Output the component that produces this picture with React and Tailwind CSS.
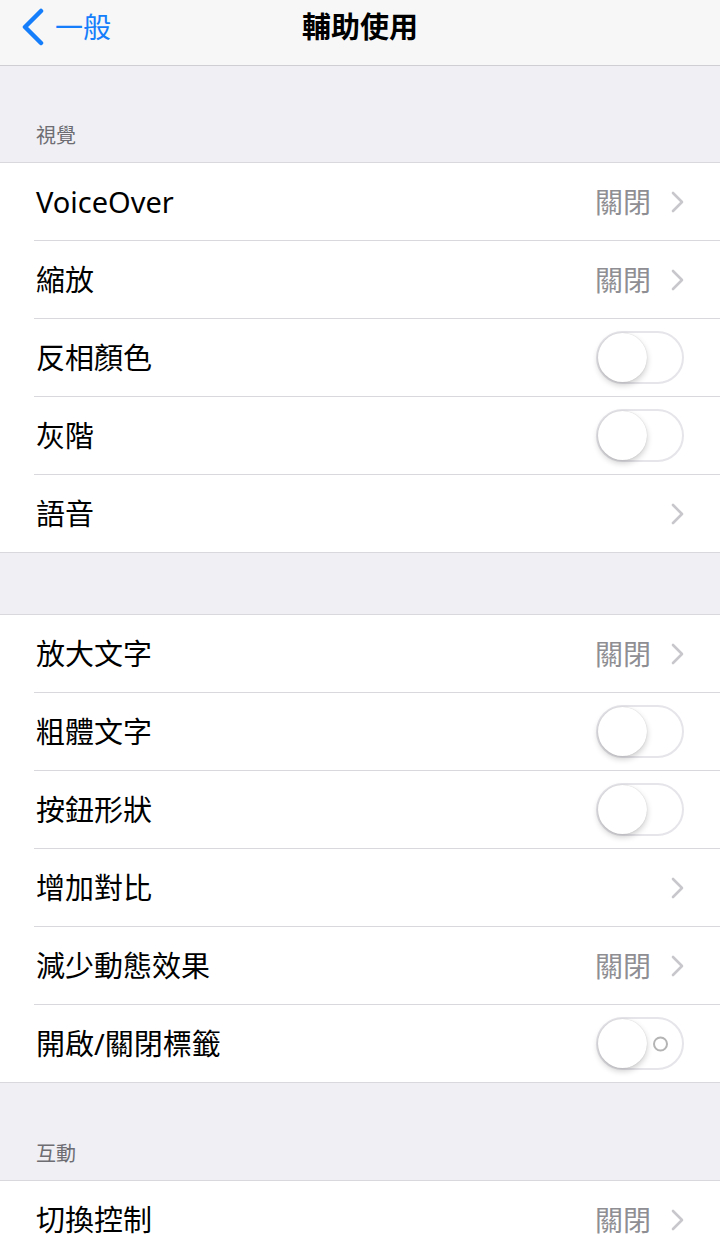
import React from 'react';

const FONT = { fontFamily: '"Noto Sans", "Noto Sans CJK TC", sans-serif' };

const Chevron = () => (
  <svg width="13" height="22" viewBox="0 0 13 22" className="ml-[20px]">
    <path d="M2 2 L11 11 L2 20" fill="none" stroke="#c7c7cc" strokeWidth="2.6" strokeLinecap="round" strokeLinejoin="round" />
  </svg>
);

const Toggle = ({ label }) => (
  <div className="relative w-[88px] h-[53px] rounded-full border-[2px] border-[#e5e5ea] bg-white">
    {label && (
      <div className="absolute right-[14px] top-1/2 -translate-y-1/2 w-[15px] h-[15px] rounded-full border-[2px] border-[#b4b4b4]" />
    )}
    <div className="absolute left-0 top-0 w-[49px] h-[49px] rounded-full bg-white shadow-[0_3px_6px_rgba(0,0,0,0.2),0_0_1px_rgba(0,0,0,0.2)]" />
  </div>
);

const Row = ({ title, value, chevron, toggle, toggleLabel, last }) => (
  <div className="pl-[34px] bg-white">
    <div className={`flex items-center justify-between pr-[36px] ${last ? 'h-[77px]' : 'h-[78px] border-b border-[#d9d9dd]'}`}>
      <span className="pl-[2px] text-[29px] text-black">{title}</span>
      <div className="flex items-center">
        {value && <span className="text-[28px] text-[#8e8e93]">{value}</span>}
        {chevron && <Chevron />}
        {toggle && <Toggle label={toggleLabel} />}
      </div>
    </div>
  </div>
);

const Group = ({ children }) => (
  <div className="border-t border-b border-[#d9d9dd] bg-white">{children}</div>
);

const Header = ({ text, h }) => (
  <div className={`${h} flex items-end pb-[11px] px-[36px] text-[20px] text-[#6d6d72]`}>{text}</div>
);

export default function App() {
  return (
    <div className="w-[720px] h-[1234px] overflow-hidden bg-[#efeff4]" style={FONT}>
      <div className="h-[66px] bg-[#f7f7f8] border-b border-[#cfcfd3] relative flex items-center justify-center">
        <div className="absolute left-[20px] top-0 h-[54px] flex items-center text-[#157efb]">
          <svg width="26" height="38" viewBox="0 0 26 38">
            <path d="M21 3 L5 19 L21 35" fill="none" stroke="#157efb" strokeWidth="4.5" strokeLinecap="round" strokeLinejoin="round" />
          </svg>
          <span className="ml-[9px] text-[28px]">一般</span>
        </div>
        <span className="text-[29px] font-semibold text-black -mt-[12px]">輔助使用</span>
      </div>

      <Header text="視覺" h="h-[96px]" />
      <Group>
        <Row title="VoiceOver" value="關閉" chevron />
        <Row title="縮放" value="關閉" chevron />
        <Row title="反相顏色" toggle />
        <Row title="灰階" toggle />
        <Row title="語音" chevron last />
      </Group>

      <div className="h-[61px]" />
      <Group>
        <Row title="放大文字" value="關閉" chevron />
        <Row title="粗體文字" toggle />
        <Row title="按鈕形狀" toggle />
        <Row title="增加對比" chevron />
        <Row title="減少動態效果" value="關閉" chevron />
        <Row title="開啟/關閉標籤" toggle toggleLabel last />
      </Group>

      <Header text="互動" h="h-[97px]" />
      <Group>
        <Row title="切換控制" value="關閉" chevron last />
      </Group>
    </div>
  );
}
